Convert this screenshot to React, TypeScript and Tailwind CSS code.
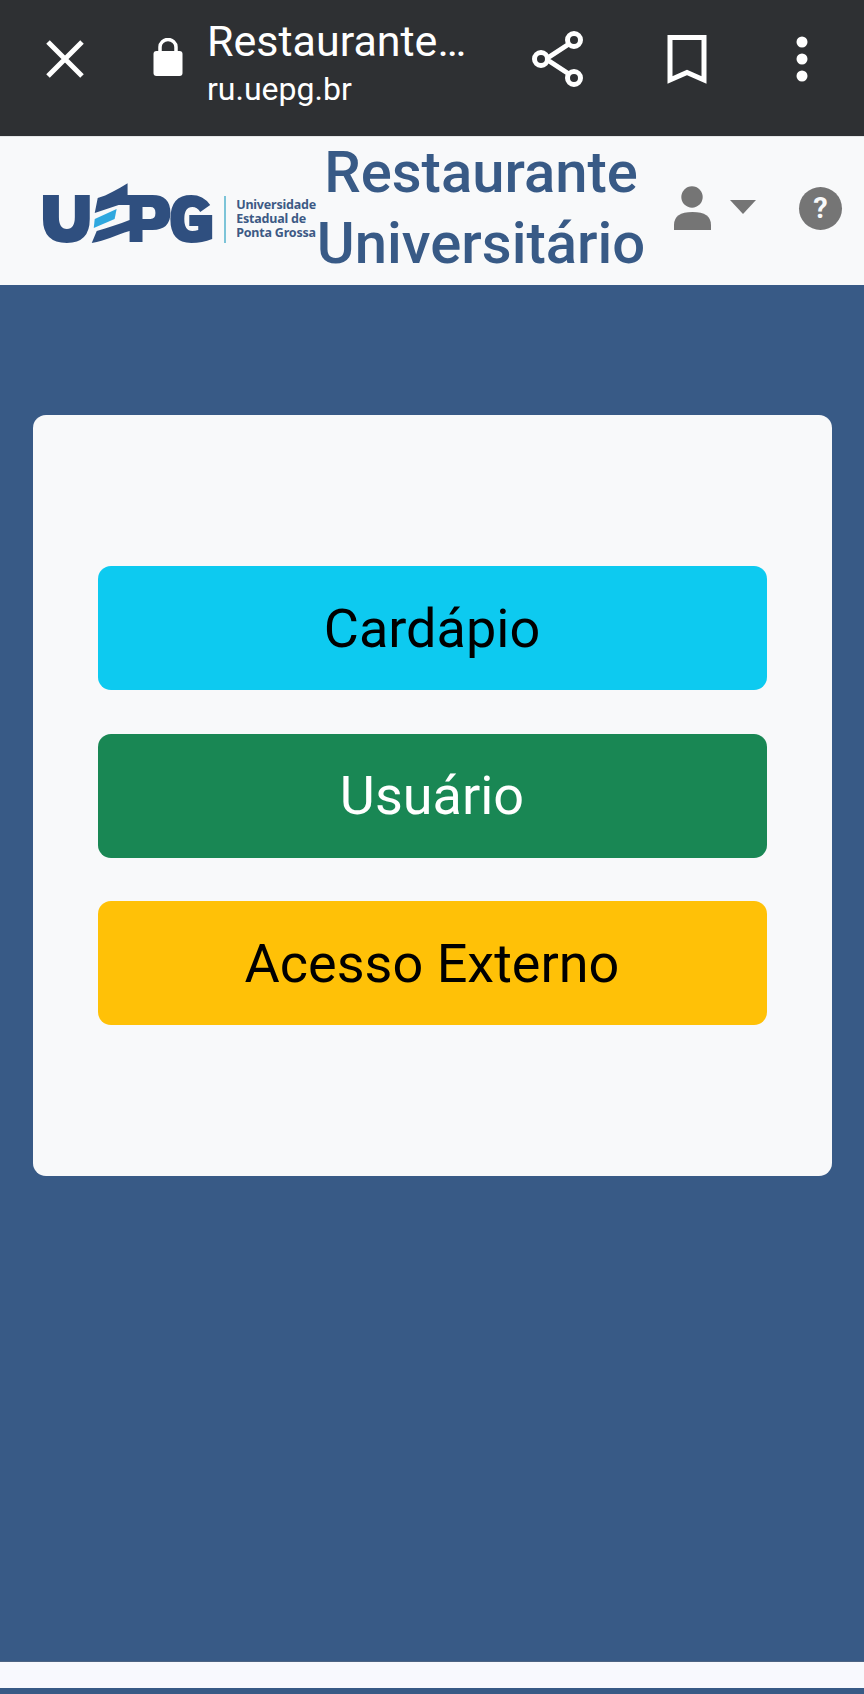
const menuButtons = [
  { label: "Cardápio", className: "bg-[#0dcaf0] text-black" },
  { label: "Usuário", className: "bg-[#198754] text-white" },
  { label: "Acesso Externo", className: "bg-[#ffc107] text-black" },
];

function BrowserBar() {
  return (
    <div className="flex h-[136px] items-center bg-[#2e3033] pb-[18px] text-white">
      <svg className="ml-[46px] h-[38px] w-[38px]" viewBox="0 0 38 38" fill="none" stroke="white" strokeWidth="5">
        <path d="M2 2 36 36M36 2 2 36" />
      </svg>
      <svg className="mb-[4px] ml-[69px] h-[38px] w-[30px]" viewBox="0 0 30 38" fill="white">
        <path d="M7 15v-6a8 7.500 0 0 1 16 0v6" fill="none" stroke="white" strokeWidth="3.5" />
        <rect x="0.5" y="13" width="29" height="25" rx="3" />
      </svg>
      <div className="mt-[5px] ml-[24px] w-[270px]">
        <p className="text-[43px] leading-[50px] whitespace-nowrap">Restaurante…</p>
        <p className="mt-[5px] text-[32px] leading-[36px]">ru.uepg.br</p>
      </div>
      <svg className="ml-[55px] h-[56px] w-[52px]" viewBox="0 0 52 56" fill="none" stroke="white" strokeWidth="5">
        <path d="M14 28 40 11M14 28 40 45" />
        <circle cx="42" cy="9" r="6.500" fill="#2e3033" />
        <circle cx="9" cy="28" r="6.500" fill="#2e3033" />
        <circle cx="42" cy="47" r="6.500" fill="#2e3033" />
      </svg>
      <svg className="ml-[83px] h-[50px] w-[40px]" viewBox="0 0 40 50" fill="none" stroke="white" strokeWidth="5">
        <path d="M3 46V3.500h34V46L20 38.500Z" />
      </svg>
      <svg className="ml-[89px] h-[46px] w-[12px]" viewBox="0 0 12 46" fill="white">
        <circle cx="6" cy="6" r="5.500" />
        <circle cx="6" cy="23" r="5.500" />
        <circle cx="6" cy="40" r="5.500" />
      </svg>
    </div>
  );
}

function Logo() {
  return (
    <div className="flex items-center">
      <svg className="h-[72px] w-[180px]" viewBox="0 0 180 72">
        {/* U */}
        <path d="M3 12H19V34Q19 46 27 46Q35 46 35 34V12H50V36Q50 60 27 60Q3 60 3 36Z" fill="#2f4f7f" />
        {/* flag and P */}
        <path
          fillRule="evenodd"
          d="M58 15C68 12 78 6 88 0V12H113Q131 12 131 30Q131 47 113 47H103V59H90V48C76 52 66 58 52 60L57 48C68 45 80 41 90 37V22H79L55 30ZM103 24H111Q116 24 116 30Q116 36 111 36H103Z"
          fill="#2f4f7f"
        />
        <path d="M55 36 77 26 75 36 54 45Z" fill="#2fa8df" />
        {/* G */}
        <path
          d="M171 22Q164 12 152 12Q131 12 131 36Q131 60 152 60Q163 60 173 56V32H150V43H159V47Q156 48 153 48Q145 48 145 36Q145 24 153 24Q158 24 161 29Z"
          fill="#2f4f7f"
        />
      </svg>
      <div className="mr-[10px] ml-[5px] h-[47px] w-[2px] bg-[#7cc4d8]" />
      <div className="font-['Noto_Sans'] text-[12.500px] leading-[14px] font-bold tracking-[-0.2px] whitespace-nowrap text-[#3d5a85]">
        <p>Universidade</p>
        <p>Estadual de</p>
        <p>Ponta Grossa</p>
      </div>
    </div>
  );
}

function SiteHeader() {
  return (
    <header className="flex h-[149px] items-center border-t border-[#e4e6e8] bg-[#f8f9fa]">
      <div className="mt-[16px] ml-[40px] w-[276px] shrink-0">
        <Logo />
      </div>
      <h1 className="w-[330px] shrink-0 pb-[7px] text-center text-[58px] leading-[71px] font-medium whitespace-nowrap text-[#385a86]">
        Restaurante
        <br />
        Universitário
      </h1>
      <div className="flex items-center pb-[6px]">
        <svg className="ml-[27px] h-[44px] w-[39px]" viewBox="0 0 39 44" fill="#757575">
          <circle cx="19" cy="11" r="10.700" />
          <path d="M1 44V39Q1 26 19.500 26Q38 26 38 39V44Z" />
        </svg>
        <svg className="mb-[3px] ml-[18px] h-[14px] w-[26px]" viewBox="0 0 26 14" fill="#757575">
          <path d="M0 0H26L13 14Z" />
        </svg>
        <div className="ml-[43px] flex h-[43px] w-[43px] items-center justify-center rounded-full bg-[#757575] text-[29px] leading-none font-bold text-[#f8f9fa]">
          ?
        </div>
      </div>
    </header>
  );
}

export default function App() {
  return (
    <div className="flex h-[1694px] w-[864px] flex-col overflow-hidden bg-[#385a86] font-['Roboto',sans-serif]">
      <BrowserBar />
      <SiteHeader />
      <main className="flex-1 px-[32.500px] pt-[130px]">
        <div className="flex flex-col gap-[43.500px] rounded-[13px] bg-[#f8f9fa] px-[65px] pt-[151px] pb-[151px]">
          {menuButtons.map((item) => (
            <button
              key={item.label}
              className={`h-[124px] rounded-[13px] text-[54px] ${item.className}`}
            >
              {item.label}
            </button>
          ))}
        </div>
      </main>
      <footer className="mb-[6px] h-[27px] border-t border-[#4d6484] bg-[#f8f9fe]" />
    </div>
  );
}
